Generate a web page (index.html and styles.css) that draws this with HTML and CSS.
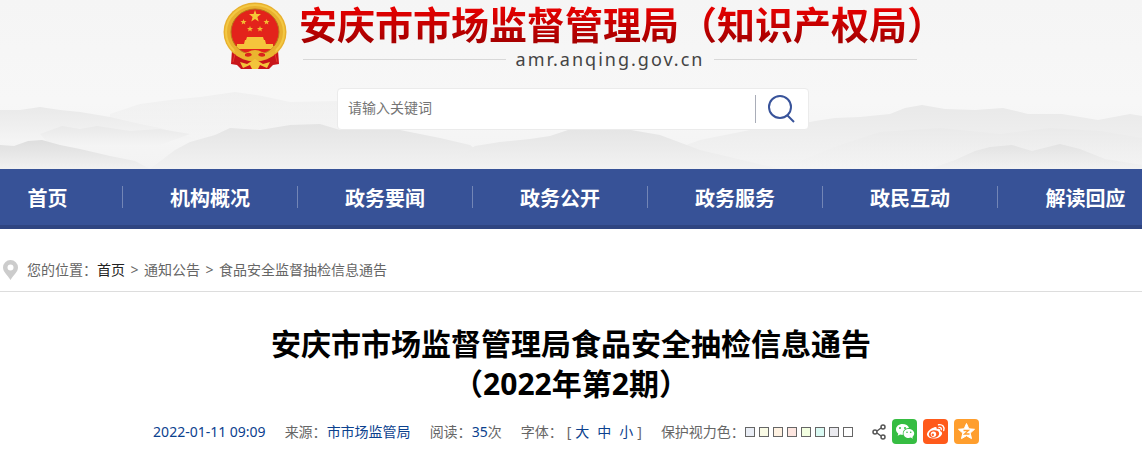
FILE: index.html
```html
<!DOCTYPE html>
<html lang="zh-CN">
<head>
    <meta charset="UTF-8">
    <meta name="viewport" content="width=device-width, initial-scale=1.0">
    <title>安庆市市场监督管理局食品安全抽检信息通告（2022年第2期）</title>
    <link rel="stylesheet" href="styles.css">
</head>
<body>

    <header class="header">
        <svg class="hills" viewBox="0 0 1142 169" preserveAspectRatio="none" aria-hidden="true">
            <defs>
                <linearGradient id="far" x1="0" y1="0" x2="0" y2="1">
                    <stop offset="0" stop-color="#e9e9e9"/>
                    <stop offset="1" stop-color="#f4f4f4"/>
                </linearGradient>
                <linearGradient id="mid" x1="0" y1="0" x2="0" y2="1">
                    <stop offset="0" stop-color="#e4e4e4"/>
                    <stop offset="1" stop-color="#f2f2f2"/>
                </linearGradient>
                <linearGradient id="near" x1="0" y1="0" x2="0" y2="1">
                    <stop offset="0" stop-color="#dedede"/>
                    <stop offset="1" stop-color="#f1f1f1"/>
                </linearGradient>
            </defs>
            <path fill="url(#far)" opacity=".5" d="M110 114 L140 104 L170 100 L200 97 L235 92 L262 96 L290 102 L340 101 L400 112 V140 H110 Z"/>
            <path fill="url(#far)" d="M0 110 L20 110 L40 107 L60 110 L80 112 L110 117 L140 124 L160 128 L200 140 H0 Z"/>
            <path fill="url(#far)" d="M40 134 L62 126 L80 129 L97 126 L130 131 L160 129 L190 134 L160 145 H50 Z"/>
            <path fill="url(#far)" d="M760 128 L790 126 L815 121 L835 118 L860 117 L890 114 L905 108 L922 105 L945 109 L975 110 L1003 108 L1028 114 L1062 114 L1098 120 L1130 114 L1142 116 V169 H620 L700 140 Z"/>
            <path fill="url(#far)" opacity=".7" d="M840 145 L880 132 L940 128 L1000 134 L1050 128 L1100 131 L1142 138 V169 H780 Z"/>
            <path fill="url(#mid)" d="M150 169 L175 150 L190 142 L215 135 L230 128 L260 130 L290 125 L320 124 L340 130 L370 125 L400 130 L440 138 L470 145 L500 169 Z"/>
            <path fill="url(#near)" d="M0 145 L14 146 L28 141 L42 140 L60 145 L80 149 L110 156 L135 161 L150 169 H0 Z"/>
            <path fill="url(#mid)" d="M440 169 L475 146 L500 142 L530 139 L550 136 L568 130 L590 127 L625 129 L660 135 L700 150 L780 169 Z"/>
            <path fill="url(#near)" opacity=".7" d="M930 169 L955 160 L975 151 L990 147 L1012 145 L1032 151 L1048 147 L1060 144 L1080 149 L1105 159 L1142 165 V169 Z"/>
        </svg>

        <div class="header-inner">
            <div class="brand">
                <svg class="emblem" viewBox="0 0 64 68" aria-hidden="true">
                    <path fill="#c9151a" d="M9 48 L8 62 L14 63 L18 67 H46 L50 63 L56 62 L55 48 Z"/>
                    <ellipse cx="32" cy="30" rx="31.500" ry="29.500" fill="#e8b02e"/>
                    <ellipse cx="32" cy="30" rx="29" ry="27" fill="none" stroke="#f3c843" stroke-width="2"/>
                    <ellipse cx="32" cy="30" rx="24" ry="23" fill="#e3231b" stroke="#b8761c"/>
                    <path fill="#f6c637" d="M32 8 L33.400 12 H38 L34.400 15 L35.700 19.500 L32 17 L28.300 19.500 L29.600 15 L26 12 H30.600 Z"/>
                    <path fill="#f2bd33" d="M20.500 17 L21.300 19 H23.500 L21.800 20.500 L22.300 22.500 L20.500 21.300 L18.700 22.500 L19.200 20.500 L17.500 19 H19.700 Z"/>
                    <path fill="#f2bd33" d="M43.500 17 L44.300 19 H46.500 L44.800 20.500 L45.300 22.500 L43.500 21.300 L41.700 22.500 L42.200 20.500 L40.500 19 H42.700 Z"/>
                    <path fill="#f2bd33" d="M27 24 L27.800 26 H30 L28.300 27.500 L28.800 29.500 L27 28.300 L25.200 29.500 L25.700 27.500 L24 26 H26.200 Z"/>
                    <path fill="#f2bd33" d="M37 24 L37.800 26 H40 L38.300 27.500 L38.800 29.500 L37 28.300 L35.200 29.500 L35.700 27.500 L34 26 H36.200 Z"/>
                    <path fill="#f5c53c" d="M24 35 H40 L41 38 H23 Z M22 38 H42 L43 42 H50 V44 H14 V42 H21 Z M13 44 H51 L48 47 H16 Z"/>
                    <path fill="#eab52f" d="M11 47 Q18 53 25 50 Q32 46 39 50 Q46 53 53 47 Q52 55 44 56 Q38 59 32 58 Q26 59 20 56 Q12 55 11 47 Z"/>
                    <path fill="#d9231c" d="M22 52 Q27 49 29 53 Q26 56 22 54 Z M42 52 Q37 49 35 53 Q38 56 42 54 Z"/>
                    <path fill="#f3c53b" d="M17 60 L24 62 L32 57 L40 62 L47 60 L44 66 L37 63 L35 67 H29 L27 63 L20 66 Z"/>
                    <path fill="none" stroke="#e8362c" d="M12 52 L10 60 M52 52 L54 60"/>
                </svg>
                <div class="brand-text">
                    <div class="site-name">安庆市市场监督管理局（知识产权局）</div>
                    <div class="site-domain"><span>amr.anqing.gov.cn</span></div>
                </div>
            </div>

            <form class="search" action="#" method="get">
                <input class="search-input" type="text" name="q" placeholder="请输入关键词" aria-label="请输入关键词">
                <button class="search-button" type="submit" aria-label="搜索">
                    <svg viewBox="0 0 28 28" fill="none" stroke="#38539a" stroke-width="2">
                        <circle cx="13" cy="12" r="11"/>
                        <path d="M20 20 L27 27"/>
                    </svg>
                </button>
            </form>
        </div>
    </header>

    <nav class="nav">
        <a href="#">首页</a>
        <a href="#">机构概况</a>
        <a href="#">政务要闻</a>
        <a href="#">政务公开</a>
        <a href="#">政务服务</a>
        <a href="#">政民互动</a>
        <a href="#">解读回应</a>
    </nav>

    <div class="crumbs">
        <svg class="pin" viewBox="0 0 15 20" aria-hidden="true">
            <path fill="#ccc" fill-rule="evenodd" d="M7.500 0 A7.500 7.500 0 0 0 0 7.500 C0 12 4.500 15 7.500 20 C10.500 15 15 12 15 7.500 A7.500 7.500 0 0 0 7.500 0 Z M7.500 4.500 A3 3 0 1 1 7.500 10.500 A3 3 0 1 1 7.500 4.500 Z"/>
        </svg>
        <span>您的位置：</span><a class="home" href="#">首页</a>
        <span class="sep">&gt;</span><a href="#">通知公告</a>
        <span class="sep">&gt;</span><a href="#">食品安全监督抽检信息通告</a>
    </div>

    <main class="article">
        <h1>安庆市市场监督管理局食品安全抽检信息通告<br>（2022年第2期）</h1>

        <div class="meta">
            <span class="value">2022-01-11 09:09</span>
            <span>来源：<span class="value">市市场监管局</span></span>
            <span>阅读：<span class="value">35</span>次</span>
            <span class="sizes">字体：
                <span class="size-list">[
                    <span class="size-buttons">
                        <button type="button">大</button>
                        <button type="button">中</button>
                        <button type="button">小</button>
                    </span>
                ]</span>
            </span>
            <span class="colors">保护视力色：
                <span class="swatches">
                    <button class="blue" type="button" aria-label="蓝"></button>
                    <button class="yellow" type="button" aria-label="黄"></button>
                    <button class="orange" type="button" aria-label="橙"></button>
                    <button class="pink" type="button" aria-label="粉"></button>
                    <button class="green" type="button" aria-label="绿"></button>
                    <button class="cyan" type="button" aria-label="青"></button>
                    <button class="gray" type="button" aria-label="灰"></button>
                    <button class="white" type="button" aria-label="白"></button>
                </span>
            </span>
            <span class="share">
                <svg class="share-mark" viewBox="0 0 14 16" fill="none" stroke="#555" stroke-width="1.500" aria-hidden="true">
                    <circle cx="3" cy="8" r="2"/>
                    <circle cx="11" cy="3" r="2"/>
                    <circle cx="11" cy="13" r="2"/>
                    <path d="M5 7 L9 4 M5 9 L9 12"/>
                </svg>
                <a class="wechat" href="#" aria-label="微信">
                    <svg viewBox="0 0 25 25">
                        <path fill="#fff" d="M10.500 5 C6.800 5 4 7.400 4 10.500 C4 12.200 4.900 13.700 6.300 14.700 L5.600 16.800 L8.200 15.500 C9 15.800 10 15.900 11 15.800 C10 12 13.300 8.800 17 9 C16.300 6.500 13.700 5 10.500 5 Z"/>
                        <path fill="#fff" d="M16.700 10 C13.700 10 11.500 12 11.500 14.500 C11.500 17 13.700 19 16.700 19 C17.500 19 18.200 18.800 18.800 18.600 L20.900 19.700 L20.400 17.900 C21.500 17 22.200 15.800 22.200 14.500 C22.200 12 19.700 10 16.700 10 Z"/>
                        <g fill="#36bd42"><circle cx="8" cy="9" r="1"/><circle cx="13" cy="9" r="1"/><circle cx="15" cy="13.300" r=".8"/><circle cx="18.700" cy="13.300" r=".8"/></g>
                    </svg>
                </a>
                <a class="weibo" href="#" aria-label="微博">
                    <svg viewBox="0 0 25 25">
                        <path fill="#fff" d="M11 8.500 C13 7.600 14.100 8.300 13.700 10.200 C16 9.400 17.500 10 17 12 C20 13 19.700 16 16.500 18 C12.500 20.500 5 20 4 16 C3.500 13.500 7 9.500 11 8.500 Z"/>
                        <ellipse cx="11" cy="15" rx="5.200" ry="3.800" fill="#ff5a1b" transform="rotate(-8 11 15)"/>
                        <circle cx="10.500" cy="15.300" r="2.700" fill="#fff"/>
                        <circle cx="9.800" cy="15.800" r="1.200" fill="#ff5a1b"/>
                        <path fill="none" stroke="#fff" stroke-width="1.400" stroke-linecap="round" d="M15.500 5.800 C19.500 5 22 8 20.700 11.500 M16 8.400 C17.800 8.100 18.800 9.300 18.200 10.800"/>
                    </svg>
                </a>
                <a class="qzone" href="#" aria-label="QQ空间">
                    <svg viewBox="0 0 25 25">
                        <path fill="#fff" stroke="#fff" stroke-linejoin="round" d="M12.500 4.500 L14.800 9.800 L20.500 10.300 L16.200 14.100 L17.500 19.600 L12.500 16.700 L7.500 19.600 L8.800 14.100 L4.500 10.300 L10.200 9.800 Z"/>
                        <path fill="none" stroke="#ff9e2d" stroke-width="1.300" d="M9.500 11.500 H14.500 L10.500 15 H15.500"/>
                    </svg>
                </a>
            </span>
        </div>
    </main>

</body>
</html>
```

FILE: styles.css
```css
* {
    margin: 0;
    padding: 0;
    box-sizing: border-box;
}

body {
    font-family: "Noto Sans", "Noto Sans CJK SC", sans-serif;
    font-size: 14px;
    line-height: 20px;
    color: #666;
    background-color: #fff;
    overflow-x: hidden;
}

a {
    color: inherit;
    text-decoration: none;
}

button {
    font: inherit;
    border: none;
    background: none;
    cursor: pointer;
}

/* header */
.header {
    position: relative;
    background: linear-gradient(#f5f5f5, #f7f7f7 60%, #f3f3f3);
}

.hills {
    position: absolute;
    top: 0;
    left: 0;
    width: 100%;
    height: 100%;
}

.header-inner {
    position: relative;
    display: flex;
    flex-direction: column;
    align-items: center;
    gap: 18px;
    padding: 2px 0 39px 4px;
}

.brand {
    display: flex;
    gap: 12px;
    height: 68px;
    padding-left: 22px;
}

.emblem {
    width: 64px;
    height: 68px;
}

.brand-text {
    white-space: nowrap;
}

.site-name {
    font-family: "Noto Sans CJK SC", sans-serif;
    font-size: 38px;
    font-weight: bold;
    line-height: 42px;
    color: transparent;
    background: linear-gradient(#e60000 15%, #a80000 90%);
    -webkit-background-clip: text;
    background-clip: text;
}

.site-domain {
    display: flex;
    align-items: center;
    gap: 10px;
    margin: 5px 28px 0 4px;
    font-size: 18px;
    letter-spacing: 2px;
    color: #444;
}

.site-domain::before,
.site-domain::after {
    content: "";
    flex: 1;
    height: 1px;
    background-color: #d8d8d8;
}

.search {
    display: flex;
    align-items: center;
    width: 472px;
    max-width: 100%;
    height: 42px;
    background-color: #fff;
    border: 1px solid #ebebeb;
    border-radius: 4px;
}

.search-input {
    flex: 1;
    min-width: 0;
    height: 40px;
    padding: 0 10px 4px;
    font: inherit;
    color: #333;
    border: none;
    outline: none;
    background: none;
}

.search-input::placeholder {
    color: #757575;
}

.search-button {
    width: 53px;
    height: 28px;
    padding-left: 11px;
    border-left: 1px solid #a9adb8;
    text-align: left;
}

.search-button svg {
    display: block;
    width: 28px;
    height: 28px;
}

/* main menu */
.nav {
    display: flex;
    align-items: center;
    height: 60px;
    background-color: #375297;
    border-bottom: 4px solid #2f4581;
    overflow: hidden;
}

.nav a {
    flex: 0 0 175px;
    height: 22px;
    font-size: 20px;
    font-weight: bold;
    line-height: 26px;
    text-align: center;
    color: #fff;
    border-right: 1px solid #7386b6;
}

.nav a:first-child {
    flex-basis: 123px;
    padding-right: 27px;
}

.nav a:last-child {
    border-right: none;
}

/* breadcrumb */
.crumbs {
    display: flex;
    align-items: center;
    padding: 31px 3px 11px;
    border-bottom: 1px solid #ddd;
}

.pin {
    width: 15px;
    height: 20px;
    margin-right: 9px;
}

.crumbs .home {
    color: #222;
}

.crumbs .sep {
    width: 19px;
    text-align: center;
}

/* article head */
.article {
    padding: 32px 20px 8px;
}

h1 {
    font-size: 30px;
    line-height: 40px;
    text-align: center;
    color: #000;
}

.meta {
    display: flex;
    justify-content: center;
    align-items: center;
    flex-wrap: wrap;
    gap: 19px;
    margin-top: 15px;
    padding-right: 10px;
}

.meta .value,
.sizes button {
    color: #0b418e;
}

.sizes,
.size-list {
    display: flex;
    gap: 4px;
}

.size-buttons {
    display: flex;
    gap: 8px;
}

.colors,
.swatches,
.share {
    display: flex;
    align-items: center;
}

.swatches {
    gap: 4px;
}

.swatches button {
    width: 10px;
    height: 10px;
    border: 1px solid #666;
}

.blue { background-color: #eaeef6; }
.yellow { background-color: #fafbe6; }
.orange { background-color: #fff2e2; }
.pink { background-color: #fde6e0; }
.green { background-color: #f3ffe1; }
.cyan { background-color: #dafaf3; }
.gray { background-color: #eaeaef; }
.white { background-color: #fff; }

.share {
    gap: 6px;
}

.share-mark {
    width: 14px;
    height: 16px;
}

.share a {
    width: 25px;
    height: 25px;
    border-radius: 4px;
}

.share a svg {
    display: block;
}

.wechat { background-color: #36bd42; }
.weibo { background-color: #ff5a1b; }
.qzone { background-color: #ff9e2d; }
```
